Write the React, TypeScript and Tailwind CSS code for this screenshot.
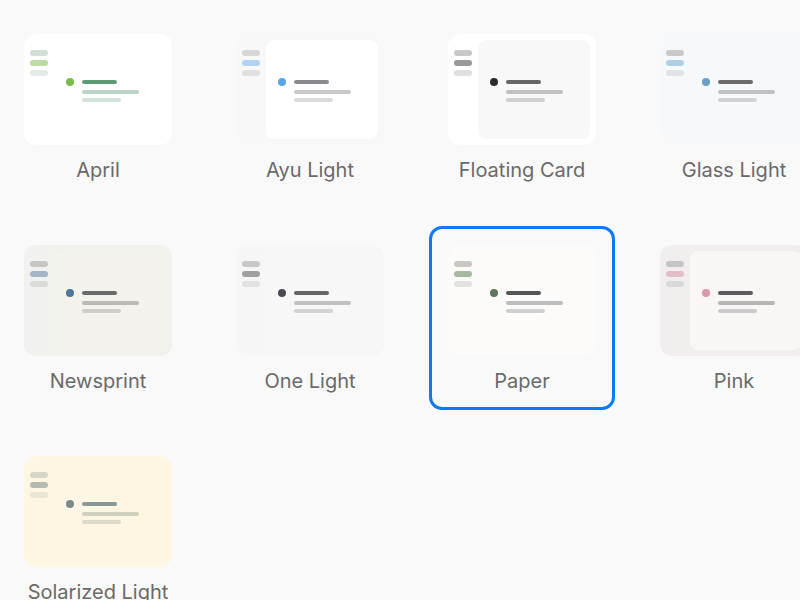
import React from "react";

type Theme = {
  name: string;
  card: string;
  panel: string;
  pills: [string, string, string];
  dot: string;
  lines: [string, string, string];
};

const themes: Theme[] = [
  {
    name: "April",
    card: "bg-[#ffffff]",
    panel: "bg-[#ffffff]",
    pills: ["bg-[#d2ddd6]", "bg-[#bddba6]", "bg-[#e3ebe6]"],
    dot: "bg-[#7bbd4a]",
    lines: ["bg-[#5e9a73]", "bg-[#bcd5c4]", "bg-[#d3e2d8]"],
  },
  {
    name: "Ayu Light",
    card: "bg-[#f8f8f8]",
    panel: "bg-[#ffffff]",
    pills: ["bg-[#d6d6d6]", "bg-[#b3d4f0]", "bg-[#e0e0e0]"],
    dot: "bg-[#5ba5e6]",
    lines: ["bg-[#8a8a8f]", "bg-[#c9c9c9]", "bg-[#dbdbdb]"],
  },
  {
    name: "Floating Card",
    card: "bg-[#ffffff]",
    panel: "bg-[#f8f8f8]",
    pills: ["bg-[#c9c9c9]", "bg-[#999999]", "bg-[#e0e0e0]"],
    dot: "bg-[#2b2b2b]",
    lines: ["bg-[#666666]", "bg-[#bfbfbf]", "bg-[#d0d0d0]"],
  },
  {
    name: "Glass Light",
    card: "bg-[#f6f9fc]",
    panel: "bg-[#f6f9fc]",
    pills: ["bg-[#cacaca]", "bg-[#afd0e3]", "bg-[#e0e2e5]"],
    dot: "bg-[#6a9fc8]",
    lines: ["bg-[#6b6b6b]", "bg-[#c0c0c0]", "bg-[#d2d2d2]"],
  },
  {
    name: "Newsprint",
    card: "bg-[#f1f2ed]",
    panel: "bg-[#f4f2ec]",
    pills: ["bg-[#c6c6c3]", "bg-[#a2b6c8]", "bg-[#dbdbd8]"],
    dot: "bg-[#4b78a0]",
    lines: ["bg-[#6b6b6b]", "bg-[#bbb9b3]", "bg-[#cecdc8]"],
  },
  {
    name: "One Light",
    card: "bg-[#f6f6f6]",
    panel: "bg-[#f7f7f7]",
    pills: ["bg-[#c8c8c8]", "bg-[#a0a0a0]", "bg-[#e1e1e1]"],
    dot: "bg-[#4a4a55]",
    lines: ["bg-[#666666]", "bg-[#c1c1c1]", "bg-[#d3d3d3]"],
  },
  {
    name: "Paper",
    card: "bg-[#fcfbf9]",
    panel: "bg-[#fcfbf9]",
    pills: ["bg-[#c8c8c5]", "bg-[#a7b9a2]", "bg-[#e2e2de]"],
    dot: "bg-[#5b7b5a]",
    lines: ["bg-[#565656]", "bg-[#bdbdbd]", "bg-[#d0d0d0]"],
  },
  {
    name: "Pink",
    card: "bg-[#f3eeee]",
    panel: "bg-[#faf6f6]",
    pills: ["bg-[#c5c5c5]", "bg-[#e2bfc8]", "bg-[#d8d8d8]"],
    dot: "bg-[#d999aa]",
    lines: ["bg-[#5c5c5c]", "bg-[#b7b4b4]", "bg-[#cccaca]"],
  },
  {
    name: "Solarized Light",
    card: "bg-[#fdf6e3]",
    panel: "bg-[#fdf6e3]",
    pills: ["bg-[#d6d6c8]", "bg-[#b6bbb1]", "bg-[#e9e6d6]"],
    dot: "bg-[#7a898c]",
    lines: ["bg-[#8a9898]", "bg-[#d0d0c2]", "bg-[#dbdacb]"],
  },
];

function Preview({ t }: { t: Theme }) {
  return (
    <div className={`w-[148px] h-[111px] rounded-xl p-[6px] flex gap-[6px] ${t.card}`}>
      <div className="w-[18px] flex flex-col gap-[4px] pt-[10px]">
        {t.pills.map((p, i) => (
          <div key={i} className={`h-[6px] rounded-full ${p}`} />
        ))}
      </div>
      <div className={`flex-1 rounded-lg flex items-center pl-[12px] ${t.panel}`}>
        <div className="flex items-start gap-[8px]">
          <div className={`w-[8px] h-[8px] rounded-full ${t.dot}`} />
          <div className="flex flex-col pt-[2px]">
            <div className={`w-[35px] h-[4px] rounded-full ${t.lines[0]}`} />
            <div className={`w-[57px] h-[4px] mt-[6px] rounded-full ${t.lines[1]}`} />
            <div className={`w-[39px] h-[4px] mt-[4px] rounded-full ${t.lines[2]}`} />
          </div>
        </div>
      </div>
    </div>
  );
}

export default function App() {
  const selected = "Paper";
  return (
    <div
      className="w-[800px] h-[600px] overflow-hidden bg-[#f9f9f9]"
      style={{ fontFamily: "Inter, 'Noto Sans', sans-serif" }}
    >
      <div className="grid grid-cols-[repeat(4,186px)] gap-x-[26px] gap-y-[27px] pl-[5px] pt-[15px] w-max">
        {themes.map((t) => (
          <div
            key={t.name}
            className={`flex flex-col items-center border-[3px] rounded-[13px] px-[16px] pt-[16px] pb-[14px] ${
              t.name === selected ? "border-[#0a7aff]" : "border-transparent"
            }`}
          >
            <Preview t={t} />
            <div className="mt-[13px] text-[20px] leading-[24px] text-[#6a6a6a] whitespace-nowrap">{t.name}</div>
          </div>
        ))}
      </div>
    </div>
  );
}
